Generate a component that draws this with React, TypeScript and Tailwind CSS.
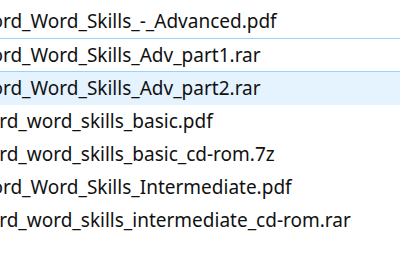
import React from 'react';

const files = [
  'Oxford_Word_Skills_-_Advanced.pdf',
  'Oxford_Word_Skills_Adv_part1.rar',
  'Oxford_Word_Skills_Adv_part2.rar',
  'oxford_word_skills_basic.pdf',
  'oxford_word_skills_basic_cd-rom.7z',
  'Oxford_Word_Skills_Intermediate.pdf',
  'oxford_word_skills_intermediate_cd-rom.rar',
];

const App: React.FC = () => {
  return (
    <div
      className="w-[400px] h-[280px] overflow-hidden bg-white pt-[5px] text-[19px] text-[#111]"
      style={{ fontFamily: '"Noto Sans", "Open Sans", sans-serif' }}
    >
      {files.map((name, i) => (
        <div
          key={name}
          className={`flex items-center whitespace-nowrap ${
            i === 1
              ? 'h-[34px] border-y border-[#99d1ff]'
              : i === 2
              ? 'h-[33px] bg-[#e5f3ff]'
              : 'h-[33px]'
          }`}
        >
          <span className="-ml-[40px]">{name}</span>
        </div>
      ))}
    </div>
  );
};

export default App;
